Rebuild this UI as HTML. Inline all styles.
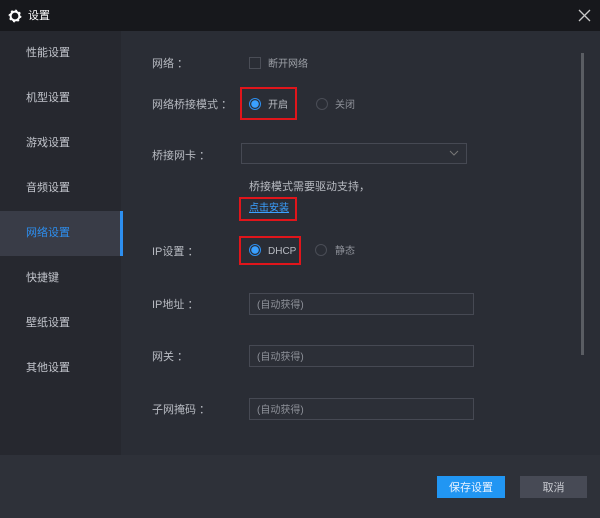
<!DOCTYPE html><html><head><meta charset="utf-8"><style>
*{margin:0;padding:0;box-sizing:border-box}
body{width:600px;height:518px;background:#2a2d35;font-family:"Liberation Sans","Noto Sans CJK SC",sans-serif;font-size:11px;line-height:13px;color:#b8bbc2;position:relative;overflow:hidden}
.a{position:absolute}
.title{left:0;top:0;width:600px;height:31px;background:#17181c}
.side{left:0;top:31px;width:121px;height:424px;background:#26282f}
.si{left:26px;font-size:11px;color:#c2c5cc}
.foot{left:0;top:455px;width:600px;height:63px;background:#2e3139}
.lab{left:152px;color:#b8bbc2}
.inp{left:249px;width:225px;height:22px;border:1px solid #464953;background:#2c2f37;color:#8e9199;font-size:10px;line-height:12px;padding:6px 7px 0}
.radio{width:12px;height:12px;border-radius:50%;border:1px solid #4a4d56}
.on{border:1px solid #2d8ff0;background:radial-gradient(circle,#3aa0ff 0 3.5px,#2a2d35 4px)}
.red{border:2px solid #e0151b}
.rt{font-size:10px;line-height:12px}
</style></head><body>
<div class="a title"></div>
<svg class="a" style="left:8px;top:9px" width="14" height="14" viewBox="0 0 14 14"><circle cx="7" cy="7" r="4.4" fill="none" stroke="#fff" stroke-width="2"/><circle cx="7" cy="7" r="5.8" fill="none" stroke="#fff" stroke-width="1.2" stroke-dasharray="2 2.55"/></svg>
<div class="a" style="left:28px;top:10px;color:#fff;font-size:11px">设置</div>
<svg class="a" style="left:578px;top:9px" width="13" height="13"><path d="M1 1L12 12M12 1L1 12" stroke="#c8c8c8" stroke-width="1.3"/></svg>
<div class="a side"></div>
<div class="a" style="left:0;top:211px;width:120px;height:45px;background:#393c47"></div>
<div class="a" style="left:120px;top:211px;width:3px;height:45px;background:#2d8ff0"></div>
<div class="a si" style="top:47px">性能设置</div>
<div class="a si" style="top:92px">机型设置</div>
<div class="a si" style="top:137px">游戏设置</div>
<div class="a si" style="top:182px">音频设置</div>
<div class="a si" style="top:227px;color:#2d8ff0">网络设置</div>
<div class="a si" style="top:272px">快捷键</div>
<div class="a si" style="top:317px">壁纸设置</div>
<div class="a si" style="top:362px">其他设置</div>
<div class="a" style="left:581px;top:53px;width:3px;height:302px;background:#5a5d63"></div>

<div class="a lab" style="top:58px">网络 ：</div>
<div class="a" style="left:249px;top:57px;width:12px;height:12px;border:1px solid #4a4d56"></div>
<div class="a rt" style="left:268px;top:59px;color:#9ea1a8">断开网络</div>

<div class="a lab" style="top:99px">网络桥接模式 ：</div>
<div class="a red" style="left:240px;top:87px;width:57px;height:33px"></div>
<div class="a radio on" style="left:249px;top:98px"></div>
<div class="a rt" style="left:268px;top:100px">开启</div>
<div class="a radio" style="left:316px;top:98px"></div>
<div class="a rt" style="left:335px;top:100px;color:#8e9199">关闭</div>

<div class="a lab" style="top:150px">桥接网卡 ：</div>
<div class="a" style="left:241px;top:143px;width:226px;height:21px;border:1px solid #464953;background:#2c2f37"></div>
<svg class="a" style="left:449px;top:150px" width="10" height="7"><path d="M1 1L5 5L9 1" fill="none" stroke="#777" stroke-width="1"/></svg>
<div class="a" style="left:249px;top:181px">桥接模式需要驱动支持，</div>
<div class="a red" style="left:239px;top:197px;width:58px;height:24px"></div>
<div class="a rt" style="left:249px;top:203px;color:#3aa0ff;text-decoration:underline">点击安装</div>

<div class="a lab" style="top:246px">IP设置 ：</div>
<div class="a red" style="left:239px;top:236px;width:62px;height:29px"></div>
<div class="a radio on" style="left:249px;top:244px"></div>
<div class="a rt" style="left:268px;top:246px">DHCP</div>
<div class="a radio" style="left:315px;top:244px"></div>
<div class="a rt" style="left:335px;top:246px;color:#8e9199">静态</div>

<div class="a lab" style="top:299px">IP地址 ：</div>
<div class="a inp" style="top:293px">(自动获得)</div>
<div class="a lab" style="top:351px">网关 ：</div>
<div class="a inp" style="top:345px">(自动获得)</div>
<div class="a lab" style="top:404px">子网掩码 ：</div>
<div class="a inp" style="top:398px">(自动获得)</div>

<div class="a foot"></div>
<div class="a" style="left:437px;top:476px;width:68px;height:22px;background:#2196f3;color:#e8f2ff;text-align:center;line-height:24px">保存设置</div>
<div class="a" style="left:520px;top:476px;width:67px;height:22px;background:#474a55;color:#c8cad0;text-align:center;line-height:24px">取消</div>
</body></html>
